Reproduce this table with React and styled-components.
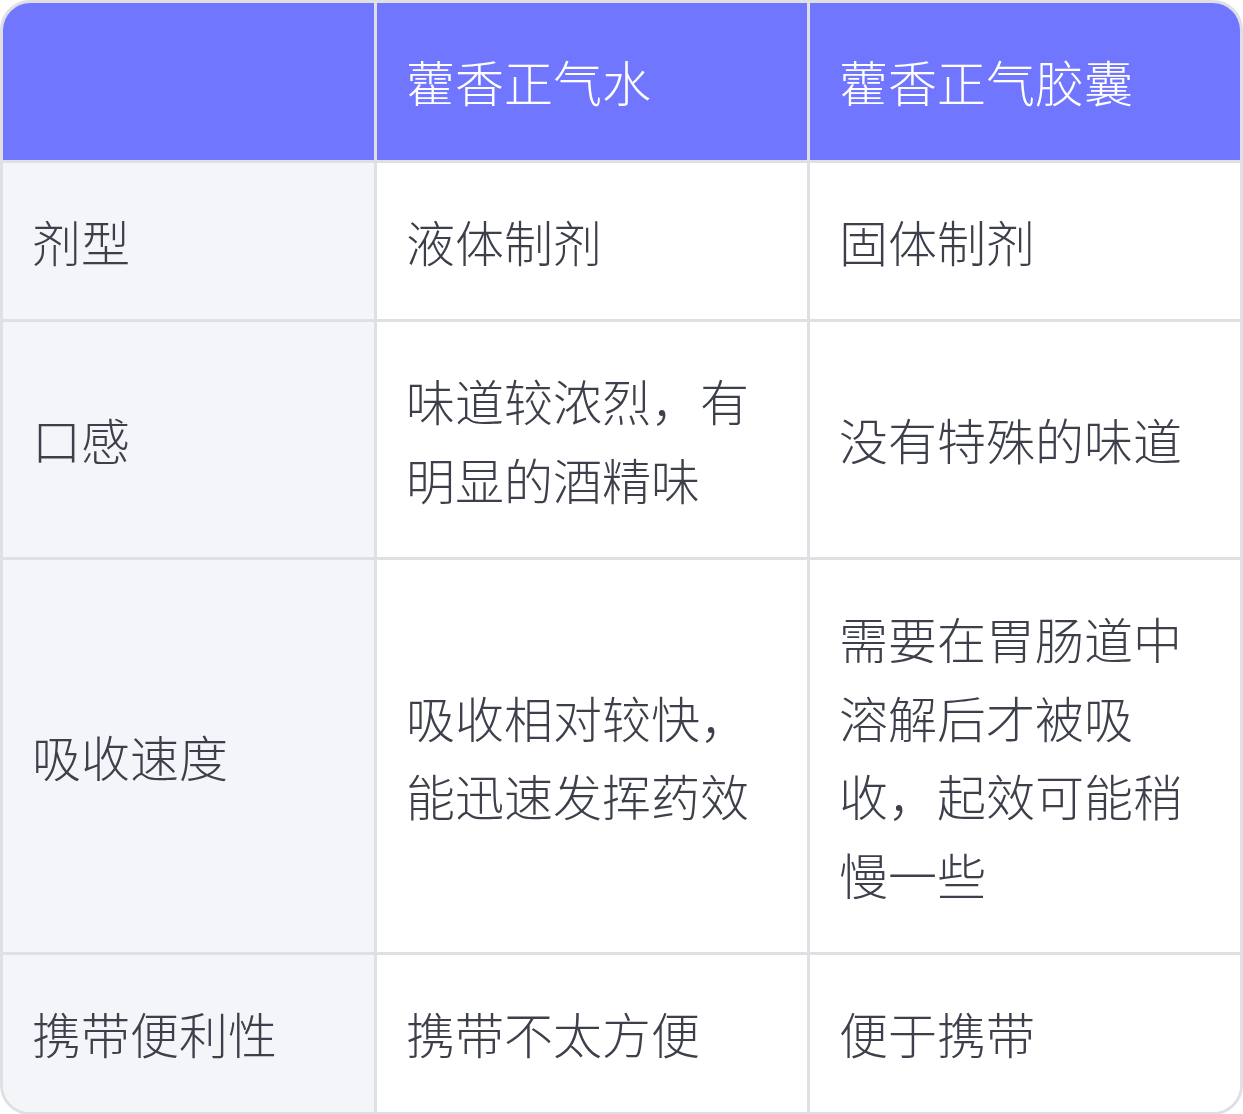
import React from "react";
import styled, { createGlobalStyle } from "styled-components";

const GlobalStyle = createGlobalStyle`
  html, body {
    margin: 0;
    padding: 0;
    background: #ffffff;
  }
  body {
    font-family: "Noto Sans CJK SC", "Noto Sans", sans-serif;
  }
`;

const Frame = styled.div`
  width: 1243px;
  box-sizing: border-box;
  border: 3px solid #dfe0e4;
  border-radius: 30px;
  overflow: hidden;
  background: #ffffff;
`;

const Table = styled.table`
  width: 100%;
  border-collapse: separate;
  border-spacing: 0;
  table-layout: fixed;
  font-family: "Noto Sans CJK SC", "Noto Sans", sans-serif;
  font-size: 49px;
  font-weight: 300;
  line-height: 78.5px;
  color: #3d404b;
`;

const Col = styled.col`
  width: ${(p) => p.$w}px;
`;

const HeadCell = styled.th`
  background: #7176ff;
  color: #ffffff;
  font-weight: 300;
  text-align: left;
  padding: 39px 29px;
  border-right: ${(p) => (p.$last ? "none" : "3px solid #dfe0e4")};
  border-bottom: 3px solid #dfe0e4;
  vertical-align: middle;
`;

const Cell = styled.td`
  background: ${(p) => (p.$label ? "#f4f5f9" : "#ffffff")};
  padding: 39px 29px;
  border-right: ${(p) => (p.$last ? "none" : "3px solid #dfe0e4")};
  border-bottom: ${(p) => (p.$bottom ? "none" : "3px solid #dfe0e4")};
  vertical-align: middle;
  word-break: break-all;
`;

const rows = [
  ["剂型", "液体制剂", "固体制剂"],
  ["口感", "味道较浓烈，有明显的酒精味", "没有特殊的味道"],
  ["吸收速度", "吸收相对较快，能迅速发挥药效", "需要在胃肠道中溶解后才被吸收，起效可能稍慢一些"],
  ["携带便利性", "携带不太方便", "便于携带"],
];

export default function App() {
  return (
    <>
      <GlobalStyle />
      <Frame>
        <Table>
          <colgroup>
            <Col $w={374} />
            <Col $w={433} />
            <Col $w={430} />
          </colgroup>
          <thead>
            <tr>
              <HeadCell></HeadCell>
              <HeadCell>藿香正气水</HeadCell>
              <HeadCell $last>藿香正气胶囊</HeadCell>
            </tr>
          </thead>
          <tbody>
            {rows.map((r, i) => (
              <tr key={i}>
                <Cell $label $bottom={i === rows.length - 1}>{r[0]}</Cell>
                <Cell $bottom={i === rows.length - 1}>{r[1]}</Cell>
                <Cell $last $bottom={i === rows.length - 1}>{r[2]}</Cell>
              </tr>
            ))}
          </tbody>
        </Table>
      </Frame>
    </>
  );
}
